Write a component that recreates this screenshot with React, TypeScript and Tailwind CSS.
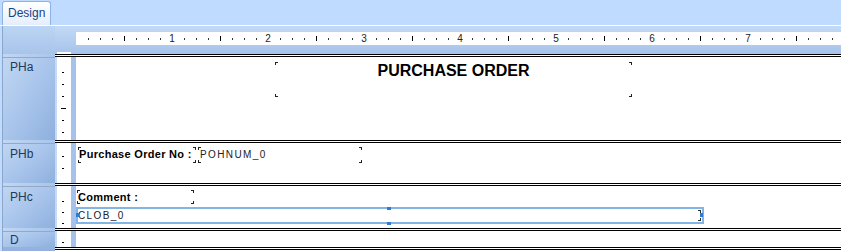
import React from "react";

type Tick = "dot" | "dash";

const rulerSteps = Array.from({ length: 63 }, (_, i) => i + 1);

function Ruler() {
  return (
    <div className="flex h-[13px] bg-white">
      {rulerSteps.map((k) => (
        <div key={k} className="flex w-[12px] shrink-0 items-center justify-end">
          <div className="flex w-0 items-center justify-center">
            {k % 8 === 0 ? (
              <span className="text-[10px] leading-none text-[#222]">{k / 8}</span>
            ) : k % 4 === 0 ? (
              <span className="h-[5px] w-px shrink-0 bg-black" />
            ) : (
              <span className="h-[2px] w-px shrink-0 bg-[#333]" />
            )}
          </div>
        </div>
      ))}
    </div>
  );
}

function Corners() {
  return (
    <>
      <span className="absolute left-0 top-0 h-[3px] w-[3px] border-l border-t border-[#222]" />
      <span className="absolute right-0 top-0 h-[3px] w-[3px] border-r border-t border-[#222]" />
      <span className="absolute bottom-0 left-0 h-[3px] w-[3px] border-b border-l border-[#222]" />
      <span className="absolute bottom-0 right-0 h-[3px] w-[3px] border-b border-r border-[#222]" />
    </>
  );
}

function DoubleLine() {
  return <div className="h-[3px] shrink-0 border-y border-black bg-white" />;
}

function Band({
  label,
  rowH,
  labelPad = "pt-[3px]",
  tickCls,
  ticks,
  children,
}: {
  label: string;
  rowH: string;
  labelPad?: string;
  tickCls: string;
  ticks: Tick[];
  children?: React.ReactNode;
}) {
  return (
    <div className={`flex overflow-hidden ${rowH}`}>
      {/* band label */}
      <div className="w-[55px] shrink-0 pl-[2px]">
        <div className="h-full border-l border-[#8ba6c9] bg-linear-to-br from-[#c2d8f3] via-[#a9c5ec] to-[#8eb0dd] pt-[3px]">
          <div
            className={`h-full border-t border-[#95a9c4] pl-[7px] text-[12px] leading-[14px] text-[#1e395b] ${labelPad}`}
          >
            {label}
          </div>
        </div>
      </div>

      <div className="flex flex-1 flex-col">
        <DoubleLine />
        <div className="flex flex-1">
          <div className="w-[2px] bg-[#c6daf3]" />
          <div className={`flex w-[14px] flex-col items-start bg-white ${tickCls}`}>
            {ticks.map((t, i) =>
              t === "dash" ? (
                <span key={i} className="ml-[4px] h-px w-[5px] bg-black" />
              ) : (
                <span key={i} className="ml-[5px] h-px w-[2px] bg-black" />
              )
            )}
          </div>
          <div className="w-[5px] bg-[#a4c2ea]" />
          <div className="relative flex-1 bg-white">{children}</div>
        </div>
      </div>
    </div>
  );
}

export default function App() {
  return (
    <div className="h-[251px] w-[841px] overflow-hidden bg-[#bfdbff] font-['Liberation_Sans',Arial,sans-serif]">
      {/* Tab strip */}
      <div className="flex h-[25px] items-end pl-[2px]">
        <div className="h-[24px] w-[49px] rounded-t-[3px] border border-b-0 border-[#8db2e3] bg-linear-to-b from-white to-[#e4eefb] pl-[5px] pt-[4px] text-[12px] leading-[14px] text-[#15428b]">
          Design
        </div>
      </div>
      <div className="h-px bg-white" />

      {/* Ruler row */}
      <div className="flex h-[28px]">
        <div className="w-[55px] shrink-0 pl-[2px]">
          <div className="h-full border-l border-[#8ba6c9] bg-linear-to-b from-[#bcd5f3] to-[#a8c4ea]" />
        </div>
        <div className="flex flex-1 flex-col bg-linear-to-b from-[#c3daf6] to-[#a6c3ea]">
          <div className="pl-[21px] pt-[6px]">
            <Ruler />
          </div>
          <div className="ml-[2px] mt-auto h-[2px] w-[14px] bg-white" />
        </div>
      </div>

      {/* PHa */}
      <Band
        label="PHa"
        rowH="h-[86px]"
        labelPad="pt-[2px]"
        tickCls="pt-[15px] gap-[11px]"
        ticks={["dot", "dot", "dot", "dash", "dot", "dot"]}
      >
        <div className="absolute left-[199px] top-[5px] h-[35px] w-[357px]">
          <Corners />
          <div className="pt-[1px] text-center text-[16px] font-bold leading-[16px] text-black">
            PURCHASE ORDER
          </div>
        </div>
      </Band>

      {/* PHb */}
      <Band label="PHb" rowH="h-[43px]" tickCls="pt-[13px] gap-[11px]" ticks={["dot", "dot"]}>
        <div className="absolute left-[2px] top-[4px] h-[16px] w-[118px]">
          <Corners />
          <div className="pl-[1px] pt-[1px] text-[11px] font-bold leading-[13px] tracking-[0.3px] text-black">
            Purchase Order No :
          </div>
        </div>
        <div className="absolute left-[122px] top-[4px] h-[16px] w-[164px]">
          <Corners />
          <div className="pl-[2px] pt-[2px] text-[10px] leading-[12px] tracking-[1.4px] text-[#222]">
            POHNUM_0
          </div>
        </div>
      </Band>

      {/* PHc */}
      <Band label="PHc" rowH="h-[45px]" tickCls="pt-[15px] gap-[10px]" ticks={["dot", "dot", "dot"]}>
        <div className="absolute left-[1px] top-[4px] h-[14px] w-[117px]">
          <Corners />
          <div className="pl-[1px] pt-[1px] text-[11px] font-bold leading-[13px] tracking-[0.3px] text-black">
            Comment :
          </div>
        </div>
        <div className="absolute left-0 top-[21px] h-[17px] w-[628px] border-2 border-[#82b4e6]">
          <div className="pt-[1px] text-[10px] leading-[12px] tracking-[1.4px] text-[#222]">CLOB_0</div>
          <span className="absolute right-[1px] top-[1px] h-[3px] w-[3px] border-r border-t border-[#333]" />
          <span className="absolute bottom-[1px] right-[1px] h-[3px] w-[3px] border-b border-r border-[#333]" />
          <span className="absolute -left-[2px] top-[4px] h-[4px] w-[3px] bg-[#2f7dd3]" />
          <span className="absolute -top-[2px] left-[309px] h-[3px] w-[4px] bg-[#2f7dd3]" />
          <span className="absolute -bottom-[3px] left-[309px] h-[3px] w-[4px] bg-[#2f7dd3]" />
          <span className="absolute -right-[1px] top-[4px] h-[4px] w-[3px] bg-[#2f7dd3]" />
        </div>
      </Band>

      {/* D */}
      <Band label="D" rowH="h-[19px]" labelPad="pt-px" tickCls="pt-[11px]" ticks={["dot"]} />

      {/* closing line */}
      <div className="flex h-[4px]">
        <div className="w-[55px] shrink-0 pl-[2px]">
          <div className="h-full border-l border-[#8ba6c9] bg-[#93b3de]" />
        </div>
        <div className="flex flex-1 flex-col">
          <DoubleLine />
          <div className="flex-1 bg-white" />
        </div>
      </div>
    </div>
  );
}
